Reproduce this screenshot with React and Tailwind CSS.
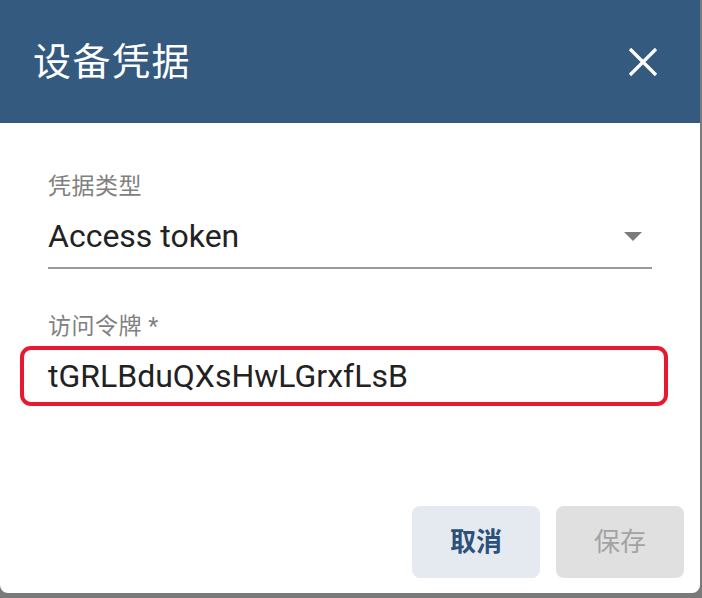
import React from 'react';

const latin = { fontFamily: 'Roboto, "Noto Sans CJK SC", sans-serif' };

export default function App() {
  return (
    <div className="w-[702px] h-[598px] bg-[#7a7a7a] overflow-hidden" style={latin}>
      <div className="w-[700px] h-[593px] bg-white rounded-b-[8px] flex flex-col overflow-hidden">
        {/* Header */}
        <div className="h-[123px] bg-[#345a7f] flex items-center justify-between pl-[33px] pr-[42px] shrink-0">
          <h1 className="text-white text-[38px] leading-none tracking-[1.5px]">设备凭据</h1>
          <button className="text-white">
            <svg width="30" height="30" viewBox="0 0 30 30" fill="none" stroke="currentColor" strokeWidth="3.2">
              <path d="M2 2L28 28M28 2L2 28" />
            </svg>
          </button>
        </div>

        {/* Body */}
        <div className="px-[48px] pt-[52px]">
          <div className="text-[#808080] text-[23px] leading-none tracking-[0.5px]">凭据类型</div>
          <div className="mt-[22px] flex items-center justify-between border-b-2 border-[#9a9a9a] pb-[15px]">
            <span className="text-[#222] text-[32px] leading-none">Access token</span>
            <svg width="18" height="9" viewBox="0 0 18 9" className="mr-[10px]">
              <path d="M0 0H18L9 9Z" fill="#7b7b7b" />
            </svg>
          </div>

          <div className="mt-[46px] text-[#808080] text-[23px] leading-none tracking-[0.5px]">访问令牌 *</div>
        </div>
        <div className="ml-[20px] mr-[32px] mt-[8px] h-[60px] border-[4px] border-[#e8192c] rounded-[11px] flex items-center pl-[24px]">
          <span className="text-[#222] text-[32px] leading-none">tGRLBduQXsHwLGrxfLsB</span>
        </div>

        {/* Footer */}
        <div className="mt-auto flex justify-end gap-[16px] pr-[16px] pb-[15px]">
          <button className="w-[128px] h-[72px] rounded-[8px] bg-[#e5e9f0] text-[#2b5079] text-[26px] font-semibold">
            取消
          </button>
          <button className="w-[128px] h-[72px] rounded-[8px] bg-[#e0e0e0] text-[#a3a3a3] text-[26px]">
            保存
          </button>
        </div>
      </div>
    </div>
  );
}
